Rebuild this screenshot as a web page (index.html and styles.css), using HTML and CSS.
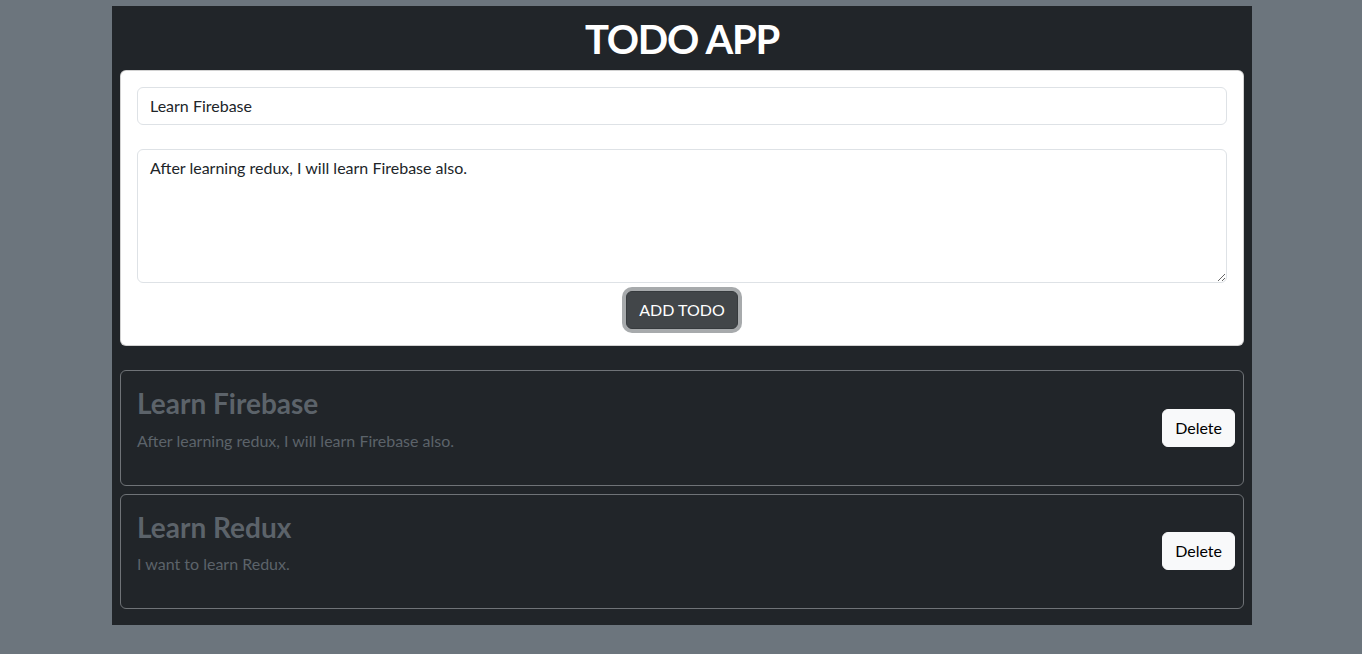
FILE: index.html
```html
<!DOCTYPE html>
<html lang="en">
<head>
<meta charset="utf-8">
<title>Todo App</title>
<link rel="stylesheet" href="styles.css">
</head>
<body>
<div class="app">
  <h1 class="app-title">TODO APP</h1>
  <form class="form-card">
    <input class="field" type="text" value="Learn Firebase">
    <textarea class="field area">After learning redux, I will learn Firebase also.</textarea>
    <div class="actions">
      <button type="button" class="btn-add">ADD TODO</button>
    </div>
  </form>
  <div class="todo-list">
    <div class="todo">
      <div class="todo-body">
        <h3 class="todo-title">Learn Firebase</h3>
        <p class="todo-desc">After learning redux, I will learn Firebase also.</p>
      </div>
      <button type="button" class="btn-delete">Delete</button>
    </div>
    <div class="todo">
      <div class="todo-body">
        <h3 class="todo-title">Learn Redux</h3>
        <p class="todo-desc">I want to learn Redux.</p>
      </div>
      <button type="button" class="btn-delete">Delete</button>
    </div>
  </div>
</div>
</body>
</html>
```
FILE: styles.css
```css
* { box-sizing: border-box; }
html, body { margin: 0; padding: 0; }
body {
  background: #6c757d;
  font-family: "Lato", "Noto Sans", sans-serif;
  font-size: 16px;
  line-height: 1.5;
  color: #212529;
  height: 654px;
  overflow: hidden;
}
.app {
  width: 1140px;
  margin: 6px 0 0 112px;
  background: #212529;
  padding: 8px 8px 16px;
}
.app-title {
  margin: 0 0 8px;
  font-size: 40px;
  line-height: 50px;
  font-weight: 700;
  letter-spacing: -1.2px;
  color: #fff;
  text-align: center;
  height: 48px;
}
.form-card {
  background: #fff;
  border: 1px solid rgba(0,0,0,0.175);
  border-radius: 6px;
  padding: 16px;
  display: flex;
  flex-direction: column;
}
.field {
  display: block;
  width: 100%;
  font-family: inherit;
  font-size: 16px;
  line-height: 24px;
  color: #212529;
  padding: 6px 12px;
  border: 1px solid #dee2e6;
  border-radius: 6px;
  background: #fff;
  margin: 0;
}
.area {
  margin-top: 24px;
  height: 134px;
  resize: vertical;
}
.actions {
  display: flex;
  justify-content: center;
  margin-top: 8px;
}
.btn-add {
  font-family: inherit;
  font-size: 16px;
  line-height: 24px;
  padding: 6px 12px;
  color: #fff;
  background: #424649;
  border: 1px solid #373b3e;
  border-radius: 6px;
  box-shadow: 0 0 0 4px rgba(130,134,137,0.7);
  cursor: pointer;
}
.todo-list {
  margin-top: 24px;
  display: flex;
  flex-direction: column;
  gap: 8px;
}
.todo {
  display: flex;
  align-items: center;
  justify-content: space-between;
  border: 1px solid #6f7377;
  border-radius: 6px;
  padding: 16px 8px 16px 16px;
}
.todo-title {
  margin: 0 0 8px;
  font-size: 28px;
  line-height: 33.6px;
  font-weight: 700;
  color: #5c636a;
}
.todo-desc {
  margin: 0 0 16px;
  color: #5c636a;
}
.btn-delete {
  font-family: inherit;
  font-size: 16px;
  line-height: 24px;
  padding: 6px 12px;
  color: #000;
  background: #f8f9fa;
  border: 1px solid #f8f9fa;
  border-radius: 6px;
  cursor: pointer;
}
```
